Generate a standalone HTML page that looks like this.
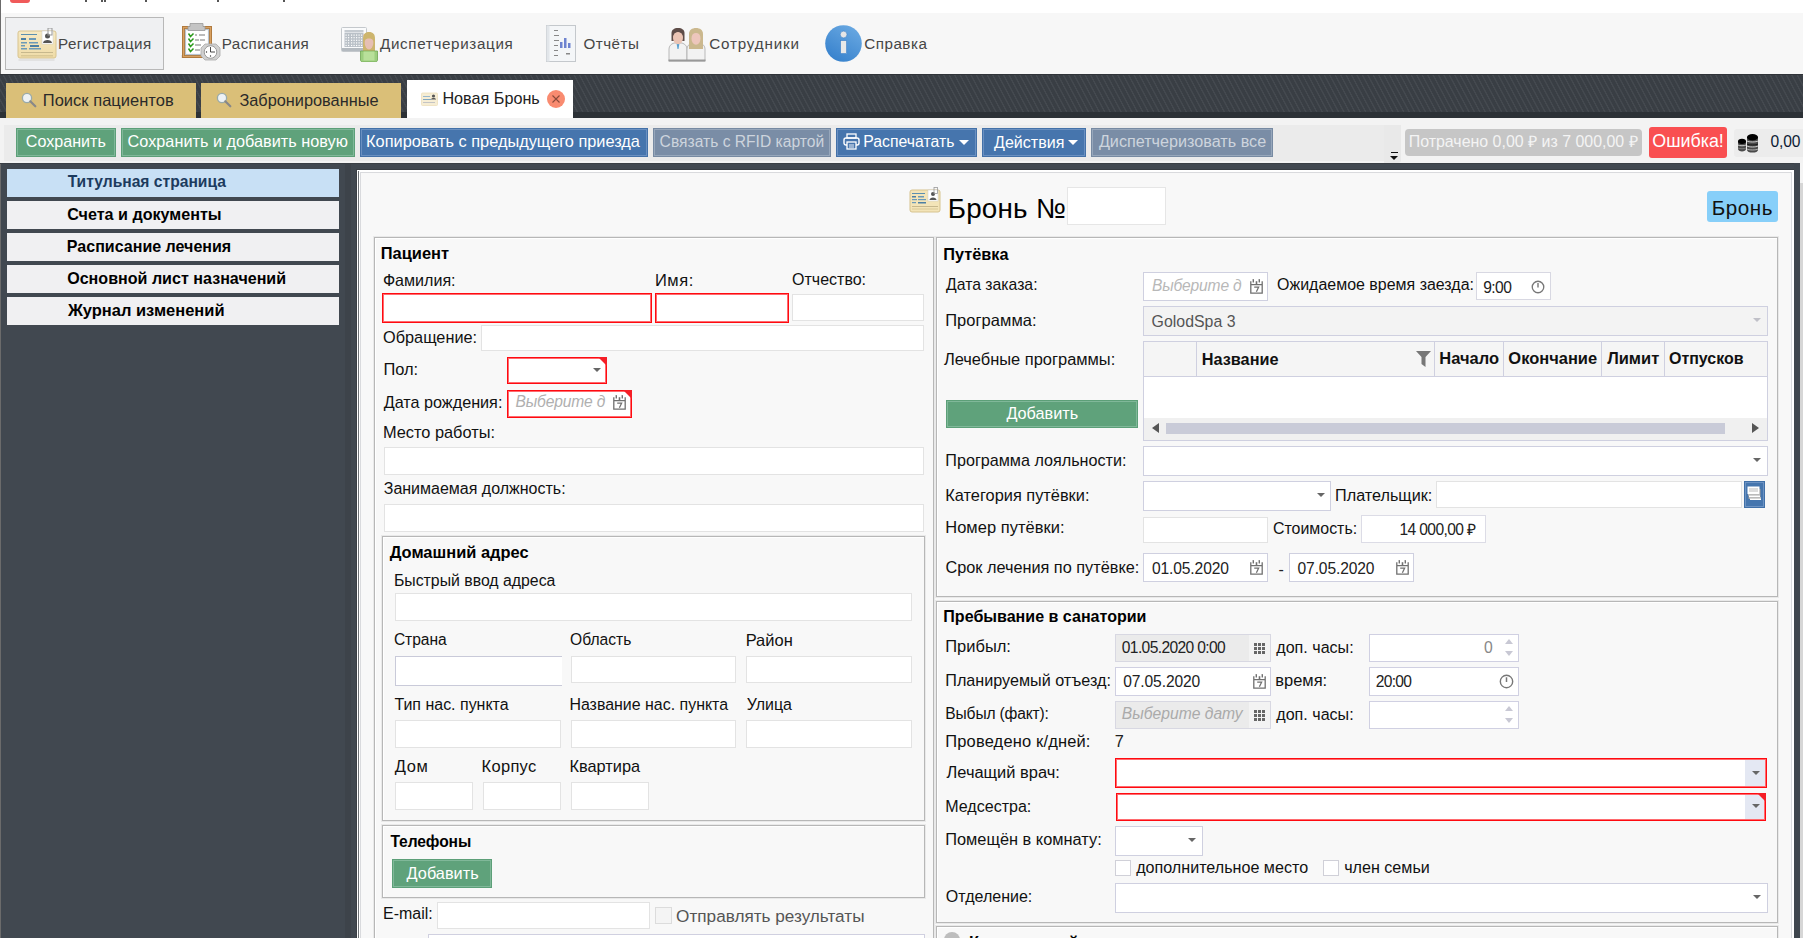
<!DOCTYPE html>
<html><head><meta charset="utf-8"><title>Бронь</title>
<style>
html,body{margin:0;padding:0;width:1803px;height:938px;overflow:hidden;background:#414850;font-family:"Liberation Sans",sans-serif}
.a{position:absolute}
.t{position:absolute;white-space:nowrap;line-height:1;font-family:"Liberation Sans",sans-serif}
</style></head><body>

<div class="a" style="left:0px;top:0px;width:1803px;height:13px;background:#fff"></div>
<div class="a" style="left:10px;top:0px;width:20px;height:3px;background:#f05a5a;border-radius:0 0 3px 3px"></div>
<div class="a" style="left:85px;top:0px;width:2px;height:2px;background:#555"></div>
<div class="a" style="left:101px;top:0px;width:2px;height:2px;background:#555"></div>
<div class="a" style="left:104px;top:0px;width:2px;height:2px;background:#555"></div>
<div class="a" style="left:145px;top:0px;width:2px;height:2px;background:#555"></div>
<div class="a" style="left:217px;top:0px;width:2px;height:2px;background:#555"></div>
<div class="a" style="left:283px;top:0px;width:2px;height:2px;background:#555"></div>
<div class="a" style="left:0px;top:13px;width:1803px;height:61px;background:#f7f7f7"></div>
<div class="a" style="left:0px;top:0px;width:1px;height:938px;background:#6b6b6b"></div>
<div class="a" style="left:5px;top:17px;width:159px;height:53px;box-sizing:border-box;border:1px solid #b8b8b8;background:#eff0f2"></div>
<svg class="a" style="left:17px;top:28px" width="40" height="33" viewBox="0 0 40 33">
<defs><linearGradient id="cg" x1="0" y1="0" x2="0" y2="1"><stop offset="0" stop-color="#f6e9c4"/><stop offset="1" stop-color="#efdca8"/></linearGradient></defs>
<rect x="1.5" y="31" width="36" height="2" fill="#e2e2e2"/><rect x="1" y="3" width="38" height="27" rx="2" fill="url(#cg)" stroke="#d8c48f"/>
<rect x="4" y="6" width="16" height="1" fill="#5b8fb0"/>
<rect x="4" y="10" width="5" height="2" fill="#4c7fa4"/><rect x="12" y="10" width="7" height="2" fill="#6c9ab8"/>
<rect x="4" y="14" width="6" height="1.5" fill="#6c9ab8"/><rect x="12" y="14" width="9" height="1.5" fill="#6c9ab8"/>
<rect x="4" y="17" width="4" height="1.5" fill="#6c9ab8"/><rect x="13" y="17" width="9" height="2" fill="#4c7fa4"/>
<rect x="4" y="20" width="6" height="1.5" fill="#6c9ab8"/><rect x="12" y="20" width="12" height="1.5" fill="#6c9ab8"/>
<rect x="4" y="24" width="32" height="1" fill="#c7b88d"/><rect x="4" y="27" width="32" height="1.5" fill="#d9c896"/>
<rect x="25" y="3" width="11" height="13" fill="#fff" stroke="#ccc" stroke-width="0.5"/>
<circle cx="30.5" cy="8" r="2.5" fill="#555"/><path d="M26 15c0-4 9-4 9 0z" fill="#555"/>
<rect x="31" y="0" width="4" height="7" fill="none" stroke="#999" stroke-width="1"/>
</svg>
<div class="t" style="left:58.08px;top:35.66px;font-size:15.2px;letter-spacing:0.43px;color:#464646;">Регистрация</div>
<svg class="a" style="left:181px;top:19px" width="42" height="44" viewBox="0 0 42 44">
<rect x="0" y="36" width="30" height="3" fill="#e4e4e4"/>
<rect x="1" y="7" width="30" height="32" fill="#b07a3e"/>
<rect x="2.5" y="8.5" width="27" height="29" fill="none" stroke="#d8a060" stroke-width="1"/>
<rect x="4.5" y="10.5" width="23" height="25" fill="#fff" stroke="#b8c4d0" stroke-width="1.2"/>
<path d="M9 4.5h13v3h2v4H7v-4h2z" fill="#c4c4c4" stroke="#999" stroke-width="0.8"/>
<path d="M7.5 14.5l2 3 3-3M7.5 19.5l2 3 3-3M7.5 24.5l2 3 3-3M7.5 29.5l2 3 3-3" fill="none" stroke="#2a9a1a" stroke-width="1.5"/>
<g fill="#bbb"><rect x="14" y="15" width="2" height="2"/><rect x="18" y="15" width="6" height="2"/><rect x="14" y="20" width="4" height="2"/><rect x="19" y="20" width="5" height="2"/><rect x="14" y="25" width="6" height="2"/><rect x="14" y="30" width="5" height="2"/></g>
<path d="M24 25h11l4 4v8l-4 4H24l-4-4v-8z" fill="#d0d0d0" stroke="#aaa" stroke-width="0.8"/>
<circle cx="29.5" cy="33" r="6.3" fill="#fff" stroke="#999" stroke-width="1"/>
<path d="M29.5 28v5h4.5" stroke="#333" stroke-width="0.9" fill="none"/><circle cx="25.5" cy="33" r="0.7" fill="#333"/><circle cx="29.5" cy="37" r="0.7" fill="#333"/>
</svg>
<div class="t" style="left:221.78px;top:35.66px;font-size:15.2px;letter-spacing:0.397px;color:#464646;">Расписания</div>
<svg class="a" style="left:341px;top:27px" width="37" height="35" viewBox="0 0 37 35">
<rect x="0.5" y="0.5" width="25" height="24" rx="1" fill="#fafbfc" stroke="#c4c8cc"/>
<rect x="1" y="21" width="24" height="3" fill="#b4bac0"/>
<rect x="3.5" y="3" width="19" height="2.5" fill="#c4cad0"/>
<rect x="3.5" y="6" width="19" height="14" fill="#b9c0c7"/>
<rect x="4.5" y="7.5" width="1.2" height="1.2" fill="#fff"/><rect x="7.0" y="7.5" width="1.2" height="1.2" fill="#fff"/><rect x="10.0" y="7.5" width="1.2" height="1.2" fill="#fff"/><rect x="12.5" y="7.5" width="1.2" height="1.2" fill="#fff"/><rect x="15.0" y="7.5" width="1.2" height="1.2" fill="#fff"/><rect x="17.5" y="7.5" width="1.2" height="1.2" fill="#fff"/><rect x="20.0" y="7.5" width="1.2" height="1.2" fill="#fff"/><rect x="22.5" y="7.5" width="1.2" height="1.2" fill="#f3a0a8"/><rect x="4.5" y="10.1" width="1.2" height="1.2" fill="#fff"/><rect x="7.0" y="10.1" width="1.2" height="1.2" fill="#fff"/><rect x="10.0" y="10.1" width="1.2" height="1.2" fill="#fff"/><rect x="12.5" y="10.1" width="1.2" height="1.2" fill="#fff"/><rect x="15.0" y="10.1" width="1.2" height="1.2" fill="#fff"/><rect x="17.5" y="10.1" width="1.2" height="1.2" fill="#fff"/><rect x="20.0" y="10.1" width="1.2" height="1.2" fill="#fff"/><rect x="22.5" y="10.1" width="1.2" height="1.2" fill="#f3a0a8"/><rect x="4.5" y="12.7" width="1.2" height="1.2" fill="#fff"/><rect x="7.0" y="12.7" width="1.2" height="1.2" fill="#fff"/><rect x="10.0" y="12.7" width="1.2" height="1.2" fill="#fff"/><rect x="12.5" y="12.7" width="1.2" height="1.2" fill="#fff"/><rect x="15.0" y="12.7" width="1.2" height="1.2" fill="#fff"/><rect x="17.5" y="12.7" width="1.2" height="1.2" fill="#fff"/><rect x="20.0" y="12.7" width="1.2" height="1.2" fill="#fff"/><rect x="22.5" y="12.7" width="1.2" height="1.2" fill="#f3a0a8"/><rect x="4.5" y="15.3" width="1.2" height="1.2" fill="#fff"/><rect x="7.0" y="15.3" width="1.2" height="1.2" fill="#fff"/><rect x="10.0" y="15.3" width="1.2" height="1.2" fill="#fff"/><rect x="12.5" y="15.3" width="1.2" height="1.2" fill="#fff"/><rect x="15.0" y="15.3" width="1.2" height="1.2" fill="#fff"/><rect x="17.5" y="15.3" width="1.2" height="1.2" fill="#fff"/><rect x="20.0" y="15.3" width="1.2" height="1.2" fill="#fff"/><rect x="22.5" y="15.3" width="1.2" height="1.2" fill="#f3a0a8"/><rect x="4.5" y="17.9" width="1.2" height="1.2" fill="#fff"/><rect x="7.0" y="17.9" width="1.2" height="1.2" fill="#fff"/><rect x="10.0" y="17.9" width="1.2" height="1.2" fill="#fff"/><rect x="12.5" y="17.9" width="1.2" height="1.2" fill="#fff"/><rect x="15.0" y="17.9" width="1.2" height="1.2" fill="#fff"/><rect x="17.5" y="17.9" width="1.2" height="1.2" fill="#fff"/><rect x="20.0" y="17.9" width="1.2" height="1.2" fill="#fff"/><rect x="22.5" y="17.9" width="1.2" height="1.2" fill="#f3a0a8"/>
<path d="M22 12c0-5 2-7 6-7s6 2 6 7v12H22z" fill="#cdb56e"/>
<ellipse cx="28" cy="16" rx="4.3" ry="6.5" fill="#e6bfb4"/>
<path d="M23.5 11c1-3 8-3 9 0v2c-2-2-7-2-9 0z" fill="#cdb56e"/>
<path d="M19.5 24h17v9c0 1-1 2-2 2h-13c-1 0-2-1-2-2z" fill="#9ccf7e" stroke="#6fa552" stroke-width="0.8"/>
<rect x="22.5" y="24.5" width="11" height="9" fill="#b8e09a"/>
</svg>
<div class="t" style="left:380.0px;top:35.66px;font-size:15.2px;letter-spacing:0.66px;color:#464646;">Диспетчеризация</div>
<svg class="a" style="left:546px;top:25px" width="31" height="38" viewBox="0 0 31 38">
<rect x="0.5" y="0.5" width="29" height="36" fill="#f4f6f8" stroke="#c4c8cc"/>
<rect x="0.5" y="0.5" width="3" height="36" fill="#e2e6ea"/>
<g fill="#888"><rect x="8" y="5" width="4" height="1"/><rect x="8" y="10" width="5" height="1"/><rect x="8" y="15" width="5" height="1"/><rect x="8" y="20" width="4" height="1"/><rect x="8" y="25" width="4" height="1"/><rect x="8" y="30" width="4" height="1"/><rect x="20" y="28" width="4" height="1.5"/></g>
<g fill="#6f84d0"><rect x="14" y="17" width="2.5" height="6"/><rect x="18" y="13" width="2.5" height="10"/><rect x="22" y="18" width="2.5" height="5"/></g>
</svg>
<div class="t" style="left:583.39px;top:35.66px;font-size:15.2px;letter-spacing:0.522px;color:#464646;">Отчёты</div>
<svg class="a" style="left:668px;top:27px" width="40" height="35" viewBox="0 0 40 35">
<path d="M1 34V22c0-3 2-5 5-6h8c3 1 5 3 5 6v12z" fill="#f2f2f2" stroke="#aaa" stroke-width="0.8"/>
<path d="M19 34V22c0-3 2-5 5-6h8c3 1 5 3 5 6v12z" fill="#f2f2f2" stroke="#aaa" stroke-width="0.8"/>
<rect x="0.5" y="32.5" width="37" height="2" fill="#999"/>
<path d="M8.5 16h3l-1 6h-1z" fill="#5aa0d0"/><path d="M26.5 16h3l-1 5h-1z" fill="#e08a98"/>
<path d="M3.5 14V6c0-3 2.5-5 6.5-5s6.5 2 6.5 5v8z" fill="#5e4c48"/>
<ellipse cx="10" cy="11" rx="5" ry="6.2" fill="#ebc4b4"/>
<path d="M4.5 8c1-4 10-4 11 0v-2c-1-3-10-3-11 0z" fill="#5e4c48"/>
<path d="M21 22V7c0-4 3-6 7-6s7 2 7 6v15z" fill="#cbb88e"/>
<ellipse cx="28" cy="11.5" rx="4.5" ry="6.2" fill="#edc6bc"/>
<path d="M23 9c1-4 9-4 10 0v-2c-1-4-9-4-10 0z" fill="#cbb88e"/>
</svg>
<div class="t" style="left:709.24px;top:35.66px;font-size:15.2px;letter-spacing:0.83px;color:#464646;">Сотрудники</div>
<svg class="a" style="left:825px;top:25px" width="38" height="38" viewBox="0 0 38 38">
<defs><linearGradient id="ig" x1="0.2" y1="1" x2="0.8" y2="0"><stop offset="0" stop-color="#3580cc"/><stop offset="1" stop-color="#6aa9e2"/></linearGradient></defs>
<circle cx="18.5" cy="18.5" r="18.3" fill="url(#ig)"/>
<circle cx="18.6" cy="9.5" r="3.4" fill="#e6e6e6" stroke="#3a7fc8" stroke-width="0.6"/>
<rect x="15.6" y="15.6" width="6" height="13" fill="#e8e8e8" stroke="#3a7fc8" stroke-width="0.6"/>
</svg>
<div class="t" style="left:864.24px;top:35.66px;font-size:15.2px;letter-spacing:0.512px;color:#464646;">Справка</div>
<div class="a" style="left:0px;top:74px;width:1803px;height:44px;background:repeating-linear-gradient(62deg,#393e44 0px,#393e44 3px,#44494f 3.4px,#44494f 4.4px,#393e44 4.8px)"></div>
<div class="a" style="left:0px;top:74px;width:1803px;height:1px;background:#303439"></div>
<div class="a" style="left:0px;top:112px;width:1803px;height:6px;background:#2c3136"></div>
<div class="a" style="left:6px;top:83px;width:190px;height:35px;background:#dabf78"></div>
<div class="a" style="left:201px;top:83px;width:200px;height:35px;background:#dabf78"></div>
<div class="a" style="left:407px;top:80px;width:166px;height:38px;background:#fff"></div>
<svg class="a" style="left:21px;top:92px" width="16" height="16" viewBox="0 0 16 16"><circle cx="6" cy="6" r="4.6" fill="#eef2f4" stroke="#9aa" stroke-width="1.3"/><path d="M9.3 9.3l5 5" stroke="#888" stroke-width="2.2" stroke-linecap="round"/></svg>
<div class="t" style="left:42.78px;top:91.57px;font-size:16.48px;letter-spacing:0.034px;color:#2a2a2a;">Поиск пациентов</div>
<svg class="a" style="left:216px;top:92px" width="16" height="16" viewBox="0 0 16 16"><circle cx="6" cy="6" r="4.6" fill="#eef2f4" stroke="#9aa" stroke-width="1.3"/><path d="M9.3 9.3l5 5" stroke="#888" stroke-width="2.2" stroke-linecap="round"/></svg>
<div class="t" style="left:239.41px;top:91.71px;font-size:16.32px;color:#2a2a2a;">Забронированные</div>
<svg class="a" style="left:421px;top:92px" width="17" height="14" viewBox="0 0 17 14"><rect x="0.5" y="1" width="16" height="12.5" rx="1" fill="#f6edd4" stroke="#ede0bc" stroke-width="0.8"/><rect x="2" y="4" width="7" height="1" fill="#9ab8cc"/><rect x="2" y="7" width="8" height="1" fill="#7fa6c0"/><rect x="2" y="10" width="12" height="1" fill="#c4c4c4"/><circle cx="12.5" cy="4" r="1.6" fill="#555"/><path d="M10 7.5c0-2 5-2 5 0z" fill="#555"/></svg>
<div class="t" style="left:442.4px;top:89.81px;font-size:16.2px;color:#222;">Новая Бронь</div>
<svg class="a" style="left:547px;top:90px" width="18" height="18" viewBox="0 0 18 18"><circle cx="9" cy="9" r="9" fill="#f98b70"/><path d="M5.5 5.5l7 7M12.5 5.5l-7 7" stroke="#8a4a3a" stroke-width="1.1"/></svg>
<div class="a" style="left:0px;top:118px;width:1803px;height:45px;background:#f3f3f3"></div>
<div class="a" style="left:4px;top:125px;width:1397px;height:36px;background:#ebebeb"></div>
<div class="a" style="left:16px;top:128px;width:100px;height:29px;box-sizing:border-box;background:#5fa27b;border:1px solid #5c9f78;box-shadow:inset 0 0 0 1px #80b899"></div>
<div class="t" style="left:25.79px;top:133.49px;font-size:16.11px;color:#fff;">Сохранить</div>
<div class="a" style="left:121px;top:128px;width:234px;height:29px;box-sizing:border-box;background:#5fa27b;border:1px solid #5c9f78;box-shadow:inset 0 0 0 1px #80b899"></div>
<div class="t" style="left:127.59px;top:133.34px;font-size:16.28px;color:#fff;">Сохранить и добавить новую</div>
<div class="a" style="left:360px;top:128px;width:288px;height:29px;box-sizing:border-box;background:#4675ad;border:1px solid #4371a8;box-shadow:inset 0 0 0 1px #6a90c1"></div>
<div class="t" style="left:366.09px;top:133.3px;font-size:16.33px;color:#fff;">Копировать с предыдущего приезда</div>
<div class="a" style="left:653px;top:128px;width:178px;height:29px;box-sizing:border-box;background:#7a8da6;border:1px solid #778aa2;box-shadow:inset 0 0 0 1px #97a7bb"></div>
<div class="t" style="left:659.62px;top:133.89px;font-size:15.63px;color:#cdd4dd;">Связать с RFID картой</div>
<div class="a" style="left:836px;top:128px;width:141px;height:29px;box-sizing:border-box;background:#4675ad;border:1px solid #4371a8;box-shadow:inset 0 0 0 1px #6a90c1"></div>
<div class="t" style="left:863.24px;top:133.74px;font-size:15.81px;color:#fff;">Распечатать</div>
<svg class="a" style="left:843px;top:133px" width="17" height="17" viewBox="0 0 17 17"><rect x="4" y="1" width="9" height="4" fill="none" stroke="#fff" stroke-width="1.3"/><rect x="1" y="5" width="15" height="7" rx="2" fill="none" stroke="#fff" stroke-width="1.4"/><rect x="4" y="9" width="9" height="7" fill="#4675ad" stroke="#fff" stroke-width="1.3"/><path d="M6 12h5M6 14h5" stroke="#fff" stroke-width="0.9"/></svg>
<div class="a" style="left:959px;top:140px;width:0;height:0;border-left:5px solid transparent;border-right:5px solid transparent;border-top:5px solid #fff"></div>
<div class="a" style="left:982px;top:128px;width:104px;height:29px;box-sizing:border-box;background:#4675ad;border:1px solid #4371a8;box-shadow:inset 0 0 0 1px #6a90c1"></div>
<div class="t" style="left:994.0px;top:133.5px;font-size:16.09px;color:#fff;">Действия</div>
<div class="a" style="left:1068px;top:140px;width:0;height:0;border-left:5px solid transparent;border-right:5px solid transparent;border-top:5px solid #fff"></div>
<div class="a" style="left:1091px;top:128px;width:182px;height:29px;box-sizing:border-box;background:#7a8da6;border:1px solid #778aa2;box-shadow:inset 0 0 0 1px #97a7bb"></div>
<div class="t" style="left:1098.9px;top:133.43px;font-size:16.18px;color:#cdd4dd;">Диспетчеризовать все</div>
<div class="a" style="left:1384px;top:125px;width:17px;height:38px;background:#e9e9e9;border-radius:0 0 3px 0"></div>
<div class="a" style="left:1391px;top:152px;width:7px;height:1px;background:#111"></div>
<div class="a" style="left:1390px;top:156px;width:0;height:0;border-left:4px solid transparent;border-right:4px solid transparent;border-top:4px solid #111"></div>
<div class="a" style="left:1405px;top:129px;width:237px;height:27px;background:#c6c6c6;border-radius:4px"></div>
<div class="t" style="left:1408.72px;top:134.03px;font-size:15.94px;color:#f4f4f4;">Потрачено 0,00 ₽ из 7 000,00 ₽</div>
<div class="a" style="left:1649px;top:127px;width:78px;height:31px;background:#f94f51;border-radius:3px"></div>
<div class="t" style="left:1652.29px;top:133.4px;font-size:17.87px;color:#fff;">Ошибка!</div>
<div class="a" style="left:1734px;top:129px;width:69px;height:28px;background:#ececec;border-radius:3px 0 0 3px"></div>
<svg class="a" style="left:1737px;top:133px" width="23" height="20" viewBox="0 0 23 20">
<path d="M1 8v8c0 1.5 2 2.5 4 2.5s4-1 4-2.5V8z" fill="#4a4a4a"/>
<path d="M1 12c1 1 7 1 8 0" stroke="#ddd" stroke-width="0.9" fill="none"/><path d="M1 15c1 1 7 1 8 0" stroke="#999" stroke-width="0.7" fill="none"/>
<ellipse cx="5" cy="8.3" rx="4" ry="2.6" fill="#000"/>
<path d="M10 4v13c0 1.6 2.5 2.6 5.5 2.6s5.5-1 5.5-2.6V4z" fill="#4a4a4a"/>
<path d="M10 8c1.5 1.3 9.5 1.3 11 0" stroke="#ddd" stroke-width="0.9" fill="none"/><path d="M10 11c1.5 1.3 9.5 1.3 11 0" stroke="#111" stroke-width="0.9" fill="none"/>
<path d="M10 13c1.5 1.3 9.5 1.3 11 0" stroke="#ddd" stroke-width="0.9" fill="none"/><path d="M10 16c1.5 1.3 9.5 1.3 11 0" stroke="#ccc" stroke-width="0.8" fill="none"/>
<ellipse cx="15.5" cy="4.3" rx="5.5" ry="3.2" fill="#000"/>
</svg>
<div class="t" style="left:1770.53px;top:134.32px;font-size:15.6px;letter-spacing:-0.11px;color:#0b1a33;">0,00</div>
<div class="a" style="left:345px;top:164px;width:6px;height:774px;background:#3d434a"></div>
<div class="a" style="left:7px;top:169px;width:332px;height:28px;background:#c8e0f5"></div>
<div class="t" style="left:67.64px;top:174.48px;font-size:15.64px;font-weight:700;color:#1c3b5e;">Титульная страница</div>
<div class="a" style="left:7px;top:201px;width:332px;height:28px;background:#f0f0f2"></div>
<div class="t" style="left:67.15px;top:206.06px;font-size:16.14px;font-weight:700;color:#000;">Счета и документы</div>
<div class="a" style="left:7px;top:233px;width:332px;height:28px;background:#f0f0f2"></div>
<div class="t" style="left:66.84px;top:238.15px;font-size:16.04px;font-weight:700;color:#000;">Расписание лечения</div>
<div class="a" style="left:7px;top:265px;width:332px;height:28px;background:#f0f0f2"></div>
<div class="t" style="left:67.16px;top:270.1px;font-size:16.09px;font-weight:700;color:#000;">Основной лист назначений</div>
<div class="a" style="left:7px;top:297px;width:332px;height:28px;background:#f0f0f2"></div>
<div class="t" style="left:67.96px;top:301.77px;font-size:16.48px;font-weight:700;color:#000;">Журнал изменений</div>
<div class="a" style="left:0px;top:163px;width:1803px;height:1px;background:#3a3f45"></div>
<div class="a" style="left:356px;top:169px;width:1439px;height:1px;background:#393e44"></div>
<div class="a" style="left:356px;top:169px;width:1px;height:769px;background:#393e44"></div>
<div class="a" style="left:357px;top:170px;width:1437px;height:768px;background:#fff"></div>
<div class="a" style="left:358px;top:171px;width:1px;height:767px;background:#6e7276"></div>
<div class="a" style="left:360px;top:172px;width:1432px;height:766px;box-sizing:border-box;background:#f8f8f8;border-left:1px solid #d9dadd;border-top:1px solid #d9dadd;border-right:1px solid #d9dadd"></div>
<div class="a" style="left:1794px;top:163px;width:6px;height:775px;background:#3f464e"></div>
<div class="a" style="left:1800px;top:163px;width:3px;height:20px;background:#f4f4f4"></div>
<div class="a" style="left:1800px;top:183px;width:3px;height:755px;background:#d6d6d6"></div>
<svg class="a" style="left:909px;top:187px" width="33" height="27" viewBox="0 0 33 27">
<rect x="1" y="3" width="30" height="22" rx="2" fill="#f3e4b8" stroke="#d6c38f"/>
<rect x="3" y="6" width="13" height="1" fill="#5b8fb0"/>
<rect x="3" y="9" width="4" height="1.5" fill="#4c7fa4"/><rect x="9" y="9" width="6" height="1.5" fill="#6c9ab8"/>
<rect x="3" y="12" width="5" height="1.2" fill="#6c9ab8"/><rect x="9" y="12" width="8" height="1.2" fill="#6c9ab8"/>
<rect x="3" y="15" width="4" height="1.2" fill="#6c9ab8"/><rect x="9" y="15" width="8" height="1.5" fill="#4c7fa4"/>
<rect x="3" y="19" width="26" height="1" fill="#c7b88d"/><rect x="3" y="21.5" width="26" height="1" fill="#d9c896"/>
<rect x="19" y="3" width="10" height="11" fill="#fff" stroke="#ccc" stroke-width="0.5"/>
<circle cx="24" cy="7" r="2" fill="#555"/><path d="M20.5 13c0-3.5 7-3.5 7 0z" fill="#555"/>
<rect x="25" y="0.5" width="3.5" height="6" fill="none" stroke="#999" stroke-width="0.8"/>
</svg>
<div class="t" style="left:947.68px;top:195.0px;font-size:27.81px;letter-spacing:0.221px;color:#000;">Бронь №</div>
<div class="a" style="left:1067px;top:187px;width:99px;height:38px;box-sizing:border-box;border:1px solid #e6e6e6;background:#fff"></div>
<div class="a" style="left:1707px;top:191px;width:71px;height:31px;background:#87cff9;border-radius:3px"></div>
<div class="t" style="left:1711.85px;top:198.09px;font-size:20.6px;letter-spacing:0.513px;color:#111;">Бронь</div>
<div class="a" style="left:373px;top:236px;width:562px;height:725px;box-sizing:border-box;border:1px solid #e9e9e9"></div>
<div class="a" style="left:374px;top:237px;width:560px;height:723px;box-sizing:border-box;border:1px solid #b7b7b7;box-shadow:inset 1px 1px 0 #fff"></div>
<div class="t" style="left:380.81px;top:244.81px;font-size:16.44px;font-weight:700;color:#000;">Пациент</div>
<div class="t" style="left:382.9px;top:271.92px;font-size:16.07px;color:#111;">Фамилия:</div>
<div class="t" style="left:654.98px;top:271.57px;font-size:16.48px;letter-spacing:0.529px;color:#111;">Имя:</div>
<div class="t" style="left:792.06px;top:271.97px;font-size:16.01px;color:#111;">Отчество:</div>
<div class="a" style="left:382px;top:293px;width:270px;height:30px;box-sizing:border-box;border:1px solid #ff0a10;box-shadow:inset 0 0 0 1px #ff6a6e;background:#fff"></div>
<div class="a" style="left:655px;top:293px;width:134px;height:30px;box-sizing:border-box;border:1px solid #ff0a10;box-shadow:inset 0 0 0 1px #ff6a6e;background:#fff"></div>
<div class="a" style="left:792px;top:294px;width:132px;height:27px;box-sizing:border-box;border:1px solid #e3e3e3;background:#fff"></div>
<div class="t" style="left:383.05px;top:329.23px;font-size:16.29px;color:#111;">Обращение:</div>
<div class="a" style="left:481px;top:325px;width:443px;height:26px;box-sizing:border-box;border:1px solid #e3e3e3;background:#fff"></div>
<div class="t" style="left:383.38px;top:360.61px;font-size:16.44px;color:#111;">Пол:</div>
<div class="a" style="left:507px;top:357px;width:100px;height:27px;box-sizing:border-box;border:1px solid #ff0a10;box-shadow:inset 0 0 0 1px #ff6a6e;background:#fff"></div>
<div class="a" style="left:593px;top:368px;width:0;height:0;border-left:4px solid transparent;border-right:4px solid transparent;border-top:4px solid #666"></div>
<div class="a" style="left:598px;top:357px;width:0;height:0;border-top:9px solid #f51e26;border-left:9px solid transparent"></div>
<div class="t" style="left:383.7px;top:393.52px;font-size:16.19px;color:#111;">Дата рождения:</div>
<div class="a" style="left:507px;top:390px;width:125px;height:28px;box-sizing:border-box;border:1px solid #ff0a10;box-shadow:inset 0 0 0 1px #ff6a6e;background:#fff"></div>
<div class="t" style="left:515.53px;top:394.32px;font-size:15.6px;font-style:italic;letter-spacing:-0.166px;color:#b0b0b0;">Выберите д</div>
<svg class="a" style="left:613px;top:395px" width="13" height="15" viewBox="0 0 13 15"><path d="M0.8 2.2V14.2H12.2V2.2M0.8 5.6H12.2" fill="none" stroke="#707070" stroke-width="1.3"/><rect x="5.7" y="2.2" width="1.6" height="3.2" fill="#707070"/><rect x="2.6" y="0" width="1.4" height="3.6" rx="0.6" fill="#707070"/><rect x="8.6" y="0" width="1.4" height="3.6" rx="0.6" fill="#707070"/><path d="M4.2 8.2h4.4l-2.2 4.6" fill="none" stroke="#707070" stroke-width="1.3"/></svg>
<div class="a" style="left:623px;top:390px;width:0;height:0;border-top:9px solid #f51e26;border-left:9px solid transparent"></div>
<div class="t" style="left:382.89px;top:423.67px;font-size:16.37px;color:#111;">Место работы:</div>
<div class="a" style="left:384px;top:447px;width:540px;height:28px;box-sizing:border-box;border:1px solid #e3e3e3;background:#fff"></div>
<div class="t" style="left:383.72px;top:480.88px;font-size:16.0px;color:#111;">Занимаемая должность:</div>
<div class="a" style="left:384px;top:504px;width:540px;height:28px;box-sizing:border-box;border:1px solid #e3e3e3;background:#fff"></div>
<div class="a" style="left:381px;top:535px;width:545px;height:287px;box-sizing:border-box;border:1px solid #e9e9e9"></div>
<div class="a" style="left:382px;top:536px;width:543px;height:285px;box-sizing:border-box;border:1px solid #b7b7b7;box-shadow:inset 1px 1px 0 #fff"></div>
<div class="t" style="left:389.7px;top:543.61px;font-size:16.44px;font-weight:700;color:#000;">Домашний адрес</div>
<div class="t" style="left:393.93px;top:573.12px;font-size:15.84px;color:#111;">Быстрый ввод адреса</div>
<div class="a" style="left:395px;top:593px;width:517px;height:28px;box-sizing:border-box;border:1px solid #e3e3e3;background:#fff"></div>
<div class="t" style="left:393.92px;top:632.32px;font-size:15.6px;letter-spacing:-0.067px;color:#111;">Страна</div>
<div class="t" style="left:570.08px;top:632.31px;font-size:15.61px;color:#111;">Область</div>
<div class="t" style="left:745.68px;top:631.57px;font-size:16.48px;color:#111;">Район</div>
<div class="a" style="left:395px;top:656px;width:167px;height:30px;box-sizing:border-box;background:#fff;border:1px solid #c9cad9;border-right:none"></div>
<div class="a" style="left:571px;top:656px;width:165px;height:27px;box-sizing:border-box;border:1px solid #e3e3e3;background:#fff"></div>
<div class="a" style="left:746px;top:656px;width:166px;height:27px;box-sizing:border-box;border:1px solid #e3e3e3;background:#fff"></div>
<div class="t" style="left:394.38px;top:696.61px;font-size:15.97px;color:#111;">Тип нас. пункта</div>
<div class="t" style="left:569.42px;top:696.63px;font-size:15.94px;color:#111;">Название нас. пункта</div>
<div class="t" style="left:746.68px;top:696.63px;font-size:15.94px;color:#111;">Улица</div>
<div class="a" style="left:395px;top:720px;width:166px;height:28px;box-sizing:border-box;border:1px solid #e3e3e3;background:#fff"></div>
<div class="a" style="left:571px;top:720px;width:165px;height:28px;box-sizing:border-box;border:1px solid #e3e3e3;background:#fff"></div>
<div class="a" style="left:746px;top:720px;width:166px;height:28px;box-sizing:border-box;border:1px solid #e3e3e3;background:#fff"></div>
<div class="t" style="left:394.7px;top:757.87px;font-size:16.48px;letter-spacing:0.635px;color:#111;">Дом</div>
<div class="t" style="left:481.58px;top:757.87px;font-size:16.48px;letter-spacing:0.3px;color:#111;">Корпус</div>
<div class="t" style="left:569.39px;top:757.97px;font-size:16.37px;color:#111;">Квартира</div>
<div class="a" style="left:395px;top:782px;width:78px;height:28px;box-sizing:border-box;border:1px solid #e3e3e3;background:#fff"></div>
<div class="a" style="left:483px;top:782px;width:78px;height:28px;box-sizing:border-box;border:1px solid #e3e3e3;background:#fff"></div>
<div class="a" style="left:571px;top:782px;width:78px;height:28px;box-sizing:border-box;border:1px solid #e3e3e3;background:#fff"></div>
<div class="a" style="left:381px;top:824px;width:545px;height:75px;box-sizing:border-box;border:1px solid #e9e9e9"></div>
<div class="a" style="left:382px;top:825px;width:543px;height:73px;box-sizing:border-box;border:1px solid #b7b7b7;box-shadow:inset 1px 1px 0 #fff"></div>
<div class="t" style="left:390.44px;top:833.62px;font-size:15.6px;font-weight:700;letter-spacing:-0.096px;color:#000;">Телефоны</div>
<div class="a" style="left:392px;top:859px;width:100px;height:29px;box-sizing:border-box;background:#5fa27b;border:1px solid #5c9f78;box-shadow:inset 0 0 0 1px #80b899"></div>
<div class="t" style="left:406.6px;top:865.22px;font-size:16.31px;color:#fff;">Добавить</div>
<div class="t" style="left:383.02px;top:905.91px;font-size:15.97px;color:#111;">E-mail:</div>
<div class="a" style="left:437px;top:902px;width:213px;height:27px;box-sizing:border-box;border:1px solid #e3e3e3;background:#fff"></div>
<div class="a" style="left:655px;top:907px;width:17px;height:17px;box-sizing:border-box;border:1px solid #dcdcdc;background:#f4f4f4"></div>
<div class="t" style="left:676.11px;top:908.49px;font-size:17.17px;color:#555;">Отправлять результаты</div>
<div class="a" style="left:428px;top:934px;width:497px;height:26px;box-sizing:border-box;border:1px solid #d0d0e0;background:#fff"></div>
<div class="a" style="left:935px;top:236px;width:844px;height:362px;box-sizing:border-box;border:1px solid #e9e9e9"></div>
<div class="a" style="left:936px;top:237px;width:842px;height:360px;box-sizing:border-box;border:1px solid #b7b7b7;box-shadow:inset 1px 1px 0 #fff"></div>
<div class="t" style="left:943.32px;top:245.73px;font-size:16.3px;font-weight:700;color:#000;">Путёвка</div>
<div class="t" style="left:946.1px;top:277.49px;font-size:15.75px;color:#111;">Дата заказа:</div>
<div class="a" style="left:1143px;top:272px;width:125px;height:29px;box-sizing:border-box;border:1px solid #cfd0e0;background:#fff"></div>
<div class="t" style="left:1151.93px;top:277.82px;font-size:15.6px;font-style:italic;letter-spacing:-0.166px;color:#b8b8b8;">Выберите д</div>
<svg class="a" style="left:1250px;top:279px" width="13" height="15" viewBox="0 0 13 15"><path d="M0.8 2.2V14.2H12.2V2.2M0.8 5.6H12.2" fill="none" stroke="#707070" stroke-width="1.3"/><rect x="5.7" y="2.2" width="1.6" height="3.2" fill="#707070"/><rect x="2.6" y="0" width="1.4" height="3.6" rx="0.6" fill="#707070"/><rect x="8.6" y="0" width="1.4" height="3.6" rx="0.6" fill="#707070"/><path d="M4.2 8.2h4.4l-2.2 4.6" fill="none" stroke="#707070" stroke-width="1.3"/></svg>
<div class="t" style="left:1277.06px;top:277.3px;font-size:15.98px;color:#111;">Ожидаемое время заезда:</div>
<div class="a" style="left:1476px;top:272px;width:75px;height:28px;box-sizing:border-box;border:1px solid #d8d8e2;background:#fff"></div>
<div class="t" style="left:1483.18px;top:279.62px;font-size:15.6px;letter-spacing:-0.558px;color:#222;">9:00</div>
<svg class="a" style="left:1531px;top:280px" width="14" height="14" viewBox="0 0 16 16"><circle cx="8" cy="8" r="6.6" fill="none" stroke="#777" stroke-width="1.5"/><path d="M8 3.5V8.5" stroke="#777" stroke-width="1.6"/></svg>
<div class="t" style="left:945.18px;top:311.77px;font-size:16.48px;letter-spacing:0.06px;color:#111;">Программа:</div>
<div class="a" style="left:1143px;top:306px;width:625px;height:30px;box-sizing:border-box;border:1px solid #cfd0e0;background:#f3f3f3"></div>
<div class="t" style="left:1151.61px;top:314.08px;font-size:15.88px;color:#555;">GolodSpa 3</div>
<div class="a" style="left:1753px;top:318px;width:0;height:0;border-left:4px solid transparent;border-right:4px solid transparent;border-top:4px solid #c0c0c8"></div>
<div class="t" style="left:943.9px;top:351.3px;font-size:16.45px;color:#111;">Лечебные программы:</div>
<div class="a" style="left:1143px;top:341px;width:625px;height:100px;box-sizing:border-box;border:1px solid #cfd0e0;background:#fff"></div>
<div class="a" style="left:1144px;top:342px;width:623px;height:34px;background:#f5f5f5;border-bottom:1px solid #cfd0e0"></div>
<div class="a" style="left:1196px;top:342px;width:1px;height:34px;background:#cfd0e0"></div>
<div class="a" style="left:1434px;top:342px;width:1px;height:34px;background:#cfd0e0"></div>
<div class="a" style="left:1503px;top:342px;width:1px;height:34px;background:#cfd0e0"></div>
<div class="a" style="left:1601px;top:342px;width:1px;height:34px;background:#cfd0e0"></div>
<div class="a" style="left:1664px;top:342px;width:1px;height:34px;background:#cfd0e0"></div>
<div class="t" style="left:1201.72px;top:350.53px;font-size:16.29px;font-weight:700;color:#111;">Название</div>
<svg class="a" style="left:1416px;top:351px" width="16" height="16" viewBox="0 0 16 16"><path d="M0 0H15L9.5 6V16L5.5 13V6z" fill="#777"/></svg>
<div class="t" style="left:1439.31px;top:350.37px;font-size:16.48px;font-weight:700;color:#111;">Начало</div>
<div class="t" style="left:1508.34px;top:350.37px;font-size:16.48px;font-weight:700;color:#111;">Окончание</div>
<div class="t" style="left:1607.2px;top:350.37px;font-size:16.48px;font-weight:700;color:#111;">Лимит</div>
<div class="t" style="left:1668.96px;top:350.79px;font-size:15.99px;font-weight:700;color:#111;">Отпусков</div>
<div class="a" style="left:1144px;top:418px;width:623px;height:22px;background:#f0f0f0"></div>
<div class="a" style="left:1166px;top:423px;width:559px;height:11px;background:#c9cbd8"></div>
<div class="a" style="left:1152px;top:423px;width:0;height:0;border-top:5.5px solid transparent;border-bottom:5.5px solid transparent;border-right:7px solid #555"></div>
<div class="a" style="left:1752px;top:423px;width:0;height:0;border-top:5.5px solid transparent;border-bottom:5.5px solid transparent;border-left:7px solid #555"></div>
<div class="a" style="left:946px;top:400px;width:192px;height:28px;box-sizing:border-box;background:#5fa27b;border:1px solid #5c9f78;box-shadow:inset 0 0 0 1px #80b899"></div>
<div class="t" style="left:1006.4px;top:405.06px;font-size:16.26px;color:#fff;">Добавить</div>
<div class="t" style="left:945.31px;top:451.64px;font-size:16.17px;color:#111;">Программа лояльности:</div>
<div class="a" style="left:1143px;top:446px;width:625px;height:30px;box-sizing:border-box;border:1px solid #cfd0e0;background:#fff"></div>
<div class="a" style="left:1753px;top:458px;width:0;height:0;border-left:4px solid transparent;border-right:4px solid transparent;border-top:4px solid #666"></div>
<div class="t" style="left:945.29px;top:486.87px;font-size:16.37px;color:#111;">Категория путёвки:</div>
<div class="a" style="left:1143px;top:481px;width:188px;height:30px;box-sizing:border-box;border:1px solid #cfd0e0;background:#fff"></div>
<div class="a" style="left:1317px;top:493px;width:0;height:0;border-left:4px solid transparent;border-right:4px solid transparent;border-top:4px solid #666"></div>
<div class="t" style="left:1335.11px;top:486.93px;font-size:16.18px;color:#111;">Плательщик:</div>
<div class="a" style="left:1436px;top:481px;width:306px;height:27px;box-sizing:border-box;border:1px solid #e3e3e3;background:#fff"></div>
<div class="a" style="left:1744px;top:481px;width:21px;height:27px;background:#4676ae;box-sizing:border-box;border:1px solid #4070a8;box-shadow:inset 0 0 0 1px #6d93c3"></div>
<svg class="a" style="left:1747px;top:486px" width="16" height="17" viewBox="0 0 16 17"><rect x="1.5" y="3" width="12" height="10" fill="#999"/><rect x="0.5" y="0.5" width="12" height="7.5" fill="#fff"/><rect x="2" y="2" width="9" height="4" fill="#ddd"/><rect x="1" y="8" width="12" height="1.5" fill="#bbb"/><rect x="2" y="9.5" width="11" height="1.5" fill="#fff"/><rect x="2" y="11" width="12" height="1.5" fill="#bbb"/><rect x="3" y="12.5" width="11" height="1.5" fill="#fff"/></svg>
<div class="t" style="left:945.28px;top:518.77px;font-size:16.48px;letter-spacing:0.026px;color:#111;">Номер путёвки:</div>
<div class="a" style="left:1143px;top:517px;width:125px;height:26px;box-sizing:border-box;border:1px solid #e3e3e3;background:#fff"></div>
<div class="t" style="left:1273.0px;top:521.24px;font-size:15.93px;color:#111;">Стоимость:</div>
<div class="a" style="left:1361px;top:515px;width:125px;height:28px;box-sizing:border-box;border:1px solid #dcdce6;background:#fff"></div>
<div class="t" style="left:1399.41px;top:521.82px;font-size:15.6px;letter-spacing:-0.602px;color:#222;">14 000,00 ₽</div>
<div class="t" style="left:945.39px;top:558.73px;font-size:16.29px;color:#111;">Срок лечения по путёвке:</div>
<div class="a" style="left:1143px;top:553px;width:125px;height:29px;box-sizing:border-box;border:1px solid #cfd0e0;background:#fff"></div>
<div class="t" style="left:1151.93px;top:560.82px;font-size:15.6px;letter-spacing:-0.116px;color:#222;">01.05.2020</div>
<svg class="a" style="left:1250px;top:560px" width="13" height="15" viewBox="0 0 13 15"><path d="M0.8 2.2V14.2H12.2V2.2M0.8 5.6H12.2" fill="none" stroke="#707070" stroke-width="1.3"/><rect x="5.7" y="2.2" width="1.6" height="3.2" fill="#707070"/><rect x="2.6" y="0" width="1.4" height="3.6" rx="0.6" fill="#707070"/><rect x="8.6" y="0" width="1.4" height="3.6" rx="0.6" fill="#707070"/><path d="M4.2 8.2h4.4l-2.2 4.6" fill="none" stroke="#707070" stroke-width="1.3"/></svg>
<div class="t" style="left:1278.5px;top:561.98px;font-size:16px;color:#222;">-</div>
<div class="a" style="left:1289px;top:553px;width:125px;height:29px;box-sizing:border-box;border:1px solid #cfd0e0;background:#fff"></div>
<div class="t" style="left:1297.53px;top:560.82px;font-size:15.6px;letter-spacing:-0.116px;color:#222;">07.05.2020</div>
<svg class="a" style="left:1396px;top:560px" width="13" height="15" viewBox="0 0 13 15"><path d="M0.8 2.2V14.2H12.2V2.2M0.8 5.6H12.2" fill="none" stroke="#707070" stroke-width="1.3"/><rect x="5.7" y="2.2" width="1.6" height="3.2" fill="#707070"/><rect x="2.6" y="0" width="1.4" height="3.6" rx="0.6" fill="#707070"/><rect x="8.6" y="0" width="1.4" height="3.6" rx="0.6" fill="#707070"/><path d="M4.2 8.2h4.4l-2.2 4.6" fill="none" stroke="#707070" stroke-width="1.3"/></svg>
<div class="a" style="left:935px;top:600px;width:844px;height:324px;box-sizing:border-box;border:1px solid #e9e9e9"></div>
<div class="a" style="left:936px;top:601px;width:842px;height:322px;box-sizing:border-box;border:1px solid #b7b7b7;box-shadow:inset 1px 1px 0 #fff"></div>
<div class="t" style="left:943.34px;top:607.53px;font-size:16.06px;font-weight:700;color:#000;">Пребывание в санатории</div>
<div class="t" style="left:945.28px;top:638.47px;font-size:16.48px;color:#111;">Прибыл:</div>
<div class="a" style="left:1115px;top:634px;width:156px;height:28px;box-sizing:border-box;border:1px solid #d8d8e2;background:#ebebeb"></div>
<div class="a" style="left:1249px;top:635px;width:21px;height:26px;background:#f3f3f3"></div>
<div class="t" style="left:1121.83px;top:639.52px;font-size:15.6px;letter-spacing:-0.631px;color:#222;">01.05.2020 0:00</div>
<svg class="a" style="left:1254px;top:643px" width="11" height="11" viewBox="0 0 11 11" fill="#666"><rect x="0" y="0" width="3" height="3"/><rect x="4" y="0" width="3" height="3"/><rect x="8" y="0" width="3" height="3"/><rect x="0" y="4" width="3" height="3"/><rect x="4" y="4" width="3" height="3"/><rect x="8" y="4" width="3" height="3"/><rect x="0" y="8" width="3" height="3"/><rect x="4" y="8" width="3" height="3"/><rect x="8" y="8" width="3" height="3"/></svg>
<div class="t" style="left:1276.3px;top:639.0px;font-size:16.09px;color:#111;">доп. часы:</div>
<div class="a" style="left:1369px;top:634px;width:150px;height:28px;box-sizing:border-box;border:1px solid #d0d0e2;background:#fff"></div>
<div class="t" style="left:1483.93px;top:639.73px;font-size:15.71px;color:#888;">0</div>
<div class="a" style="left:1505px;top:639px;width:0;height:0;border-left:4.5px solid transparent;border-right:4.5px solid transparent;border-bottom:5px solid #c8c8d4"></div>
<div class="a" style="left:1505px;top:651px;width:0;height:0;border-left:4.5px solid transparent;border-right:4.5px solid transparent;border-top:5px solid #c8c8d4"></div>
<div class="t" style="left:945.31px;top:671.74px;font-size:16.17px;color:#111;">Планируемый отъезд:</div>
<div class="a" style="left:1115px;top:667px;width:156px;height:29px;box-sizing:border-box;border:1px solid #d0d0e2;background:#fff"></div>
<div class="t" style="left:1123.23px;top:674.12px;font-size:15.6px;letter-spacing:-0.116px;color:#222;">07.05.2020</div>
<svg class="a" style="left:1253px;top:674px" width="13" height="15" viewBox="0 0 13 15"><path d="M0.8 2.2V14.2H12.2V2.2M0.8 5.6H12.2" fill="none" stroke="#707070" stroke-width="1.3"/><rect x="5.7" y="2.2" width="1.6" height="3.2" fill="#707070"/><rect x="2.6" y="0" width="1.4" height="3.6" rx="0.6" fill="#707070"/><rect x="8.6" y="0" width="1.4" height="3.6" rx="0.6" fill="#707070"/><path d="M4.2 8.2h4.4l-2.2 4.6" fill="none" stroke="#707070" stroke-width="1.3"/></svg>
<div class="t" style="left:1275.31px;top:671.57px;font-size:16.48px;color:#111;">время:</div>
<div class="a" style="left:1369px;top:667px;width:150px;height:29px;box-sizing:border-box;border:1px solid #d0d0e2;background:#fff"></div>
<div class="t" style="left:1375.72px;top:674.22px;font-size:15.6px;letter-spacing:-0.674px;color:#222;">20:00</div>
<svg class="a" style="left:1499px;top:674px" width="15" height="15" viewBox="0 0 16 16"><circle cx="8" cy="8" r="6.6" fill="none" stroke="#777" stroke-width="1.5"/><path d="M8 3.5V8.5" stroke="#777" stroke-width="1.6"/></svg>
<div class="t" style="left:945.35px;top:705.52px;font-size:15.6px;letter-spacing:-0.164px;color:#111;">Выбыл (факт):</div>
<div class="a" style="left:1115px;top:701px;width:156px;height:28px;box-sizing:border-box;border:1px solid #d8d8e2;background:#ebebeb"></div>
<div class="a" style="left:1249px;top:702px;width:21px;height:26px;background:#f3f3f3"></div>
<div class="t" style="left:1121.83px;top:706.28px;font-size:15.65px;font-style:italic;color:#aaa;">Выберите дату</div>
<svg class="a" style="left:1254px;top:710px" width="11" height="11" viewBox="0 0 11 11" fill="#666"><rect x="0" y="0" width="3" height="3"/><rect x="4" y="0" width="3" height="3"/><rect x="8" y="0" width="3" height="3"/><rect x="0" y="4" width="3" height="3"/><rect x="4" y="4" width="3" height="3"/><rect x="8" y="4" width="3" height="3"/><rect x="0" y="8" width="3" height="3"/><rect x="4" y="8" width="3" height="3"/><rect x="8" y="8" width="3" height="3"/></svg>
<div class="t" style="left:1276.3px;top:706.1px;font-size:16.09px;color:#111;">доп. часы:</div>
<div class="a" style="left:1369px;top:701px;width:150px;height:28px;box-sizing:border-box;border:1px solid #d0d0e2;background:#fff"></div>
<div class="a" style="left:1505px;top:706px;width:0;height:0;border-left:4.5px solid transparent;border-right:4.5px solid transparent;border-bottom:5px solid #c8c8d4"></div>
<div class="a" style="left:1505px;top:718px;width:0;height:0;border-left:4.5px solid transparent;border-right:4.5px solid transparent;border-top:5px solid #c8c8d4"></div>
<div class="t" style="left:945.28px;top:732.97px;font-size:16.48px;letter-spacing:0.165px;color:#111;">Проведено к/дней:</div>
<div class="t" style="left:1114.68px;top:733.13px;font-size:16.3px;color:#222;">7</div>
<div class="t" style="left:946.5px;top:764.0px;font-size:16.45px;color:#111;">Лечащий врач:</div>
<div class="a" style="left:1115px;top:758px;width:652px;height:30px;box-sizing:border-box;border:1px solid #ff0a10;box-shadow:inset 0 0 0 1px #ff6a6e;background:#fff"></div>
<div class="a" style="left:1745px;top:760px;width:20px;height:26px;background:#e4e8f3"></div>
<div class="a" style="left:1752px;top:771px;width:0;height:0;border-left:4px solid transparent;border-right:4px solid transparent;border-top:4px solid #666"></div>
<div class="t" style="left:945.22px;top:798.03px;font-size:16.06px;color:#111;">Медсестра:</div>
<div class="a" style="left:1116px;top:793px;width:650px;height:28px;box-sizing:border-box;border:1px solid #ff0a10;box-shadow:inset 0 0 0 1px #ff6a6e;background:#fff"></div>
<div class="a" style="left:1745px;top:795px;width:19px;height:24px;background:#e4e8f3"></div>
<div class="a" style="left:1752px;top:804px;width:0;height:0;border-left:4px solid transparent;border-right:4px solid transparent;border-top:4px solid #666"></div>
<div class="a" style="left:1757px;top:793px;width:0;height:0;border-top:9px solid #f51e26;border-left:9px solid transparent"></div>
<div class="t" style="left:945.19px;top:830.65px;font-size:16.39px;color:#111;">Помещён в комнату:</div>
<div class="a" style="left:1115px;top:826px;width:88px;height:30px;box-sizing:border-box;border:1px solid #cfd0e0;background:#fff"></div>
<div class="a" style="left:1188px;top:838px;width:0;height:0;border-left:4px solid transparent;border-right:4px solid transparent;border-top:4px solid #666"></div>
<div class="a" style="left:1115px;top:860px;width:16px;height:16px;box-sizing:border-box;border:1px solid #d0d0d8;background:#fff"></div>
<div class="t" style="left:1136.2px;top:858.58px;font-size:16.12px;color:#111;">дополнительное место</div>
<div class="a" style="left:1323px;top:860px;width:16px;height:16px;box-sizing:border-box;border:1px solid #d0d0d8;background:#fff"></div>
<div class="t" style="left:1344.19px;top:858.57px;font-size:16.13px;color:#111;">член семьи</div>
<div class="t" style="left:945.86px;top:887.94px;font-size:16.05px;color:#111;">Отделение:</div>
<div class="a" style="left:1115px;top:883px;width:653px;height:30px;box-sizing:border-box;border:1px solid #cfd0e0;background:#fff"></div>
<div class="a" style="left:1753px;top:895px;width:0;height:0;border-left:4px solid transparent;border-right:4px solid transparent;border-top:4px solid #666"></div>
<div class="a" style="left:935px;top:925px;width:844px;height:36px;box-sizing:border-box;border:1px solid #e9e9e9"></div>
<div class="a" style="left:936px;top:926px;width:842px;height:34px;box-sizing:border-box;border:1px solid #b7b7b7;box-shadow:inset 1px 1px 0 #fff"></div>
<div class="a" style="left:944px;top:932px;width:16px;height:16px;border-radius:8px;background:#bdbdbd"></div>
<div class="t" style="left:968.92px;top:933.74px;font-size:16.28px;font-weight:700;color:#000;">Комментарий</div>
</body></html>
